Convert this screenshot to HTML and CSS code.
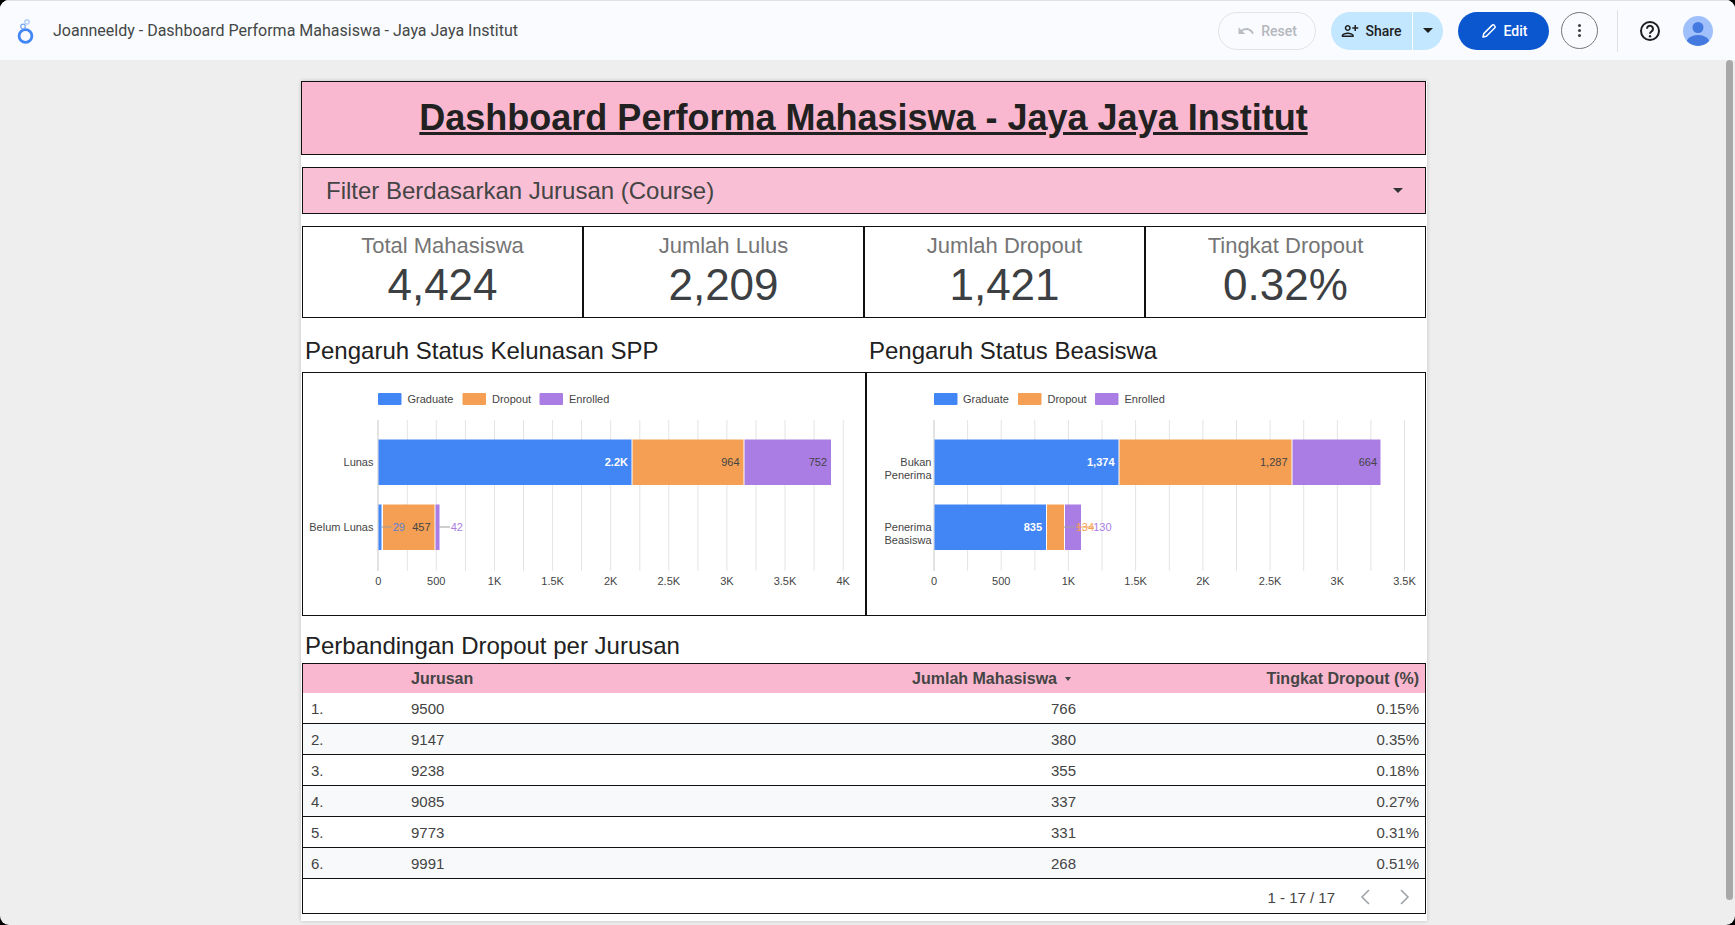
FILE: index.html
```html
<!DOCTYPE html>
<html>
<head>
<title>Dashboard Performa Mahasiswa - Jaya Jaya Institut</title>
<meta name="viewport" content="width=device-width, initial-scale=1.0">
<link rel="stylesheet" href="styles.css">
</head>
<body>

<div class="app">

<header class="topbar">
  <svg class="logo" viewBox="0 0 20 28" width="20" height="28">
    <circle cx="9.5" cy="19" r="6.4" fill="none" stroke="#4285f4" stroke-width="2.8"/>
    <circle cx="7" cy="9.5" r="2.3" fill="none" stroke="#7baaf7" stroke-width="1.3"/>
    <circle cx="11" cy="5" r="2.2" fill="none" stroke="#a3c4f9" stroke-width="1.2"/>
  </svg>
  <span class="report-name">Joanneeldy - Dashboard Performa Mahasiswa - Jaya Jaya Institut</span>

  <div class="actions">
    <button class="btn btn-reset">
      <svg viewBox="0 0 24 24" width="18" height="18"><path fill="#b9bcc1" d="M12.5 8c-2.65 0-5.05 1-6.9 2.6L2 7v9h9l-3.62-3.62A7.98 7.98 0 0 1 12.5 10.5c3.54 0 6.55 2.31 7.6 5.5l2.37-.78C21.08 11.03 17.15 8 12.5 8z"/></svg>
      Reset
    </button>
    <div class="share">
      <button class="btn btn-share">
        <svg viewBox="0 0 24 24" width="18" height="18"><path fill="#1f1f1f" d="M15 12c2.2 0 4-1.8 4-4s-1.800-4-4-4-4 1.800-4 4 1.800 4 4 4zm0-6c1.100 0 2 .9 2 2s-.9 2-2 2-2-.9-2-2 .9-2 2-2zm0 8c-2.700 0-8 1.300-8 4v2h16v-2c0-2.700-5.300-4-8-4zm-6 4c.2-.7 3.300-2 6-2s5.800 1.300 6 2H9zM6 12V9h3V7H6V4H4v3H1v2h3v3h2z" transform="matrix(-1 0 0 1 24 0)"/></svg>
        Share
      </button>
      <button class="btn btn-caret"><span class="caret"></span></button>
    </div>
    <button class="btn btn-edit">
      <svg viewBox="0 0 24 24" width="18" height="18"><path fill="none" stroke="#fff" stroke-width="2" stroke-linejoin="round" d="M4 20l1-4.500L16 4.500a2 2 0 0 1 3 0l.5.5a2 2 0 0 1 0 3L8.500 19z"/></svg>
      Edit
    </button>
    <button class="btn-more"><i></i><i></i><i></i></button>
    <span class="bar-divider"></span>
    <svg class="help" viewBox="0 0 24 24" width="24" height="24"><circle cx="12" cy="12" r="9" fill="none" stroke="#1f1f1f" stroke-width="2"/><path fill="none" stroke="#1f1f1f" stroke-width="2" d="M9 9.800a3 3 0 1 1 4.700 2.400c-1 .7-1.700 1.300-1.700 2.600"/><circle cx="12" cy="17.300" r="1.200" fill="#1f1f1f"/></svg>
    <svg class="avatar" viewBox="0 0 30 30" width="30" height="30">
      <defs><clipPath id="avatar-clip"><circle cx="15" cy="15" r="15"/></clipPath></defs>
      <circle cx="15" cy="15" r="15" fill="#a0c0fb"/>
      <g clip-path="url(#avatar-clip)" fill="#4479df">
        <circle cx="15" cy="11.500" r="5.500"/>
        <ellipse cx="15" cy="26.500" rx="11.500" ry="7.500"/>
      </g>
    </svg>
  </div>
</header>

<main class="canvas">
<div class="page">

  <h1 class="title">Dashboard Performa Mahasiswa - Jaya Jaya Institut</h1>

  <div class="filter">
    <span>Filter Berdasarkan Jurusan (Course)</span>
    <span class="caret"></span>
  </div>

  <section class="scores">
    <div class="score"><p>Total Mahasiswa</p><b>4,424</b></div>
    <div class="score"><p>Jumlah Lulus</p><b>2,209</b></div>
    <div class="score"><p>Jumlah Dropout</p><b>1,421</b></div>
    <div class="score"><p>Tingkat Dropout</p><b>0.32%</b></div>
  </section>

  <section class="charts">
    <div class="chart chart-left">
      <h2>Pengaruh Status Kelunasan SPP</h2>
      <div class="chart-box">
        <svg class="plot" viewBox="0 0 564 244" width="564" height="244">
          <g class="legend">
            <rect class="blue" x="76" y="21" width="23.500" height="12" rx="1"/>
            <text x="105.500" y="27">Graduate</text>
            <rect class="orange" x="160.500" y="21" width="23.500" height="12" rx="1"/>
            <text x="190" y="27">Dropout</text>
            <rect class="purple" x="237.500" y="21" width="23.500" height="12" rx="1"/>
            <text x="267" y="27">Enrolled</text>
          </g>
          <g class="grid">
            <line x1="105.300" x2="105.300" y1="48" y2="199"/>
            <line x1="134.300" x2="134.300" y1="48" y2="199"/>
            <line x1="163.400" x2="163.400" y1="48" y2="199"/>
            <line x1="192.500" x2="192.500" y1="48" y2="199"/>
            <line x1="221.500" x2="221.500" y1="48" y2="199"/>
            <line x1="250.600" x2="250.600" y1="48" y2="199"/>
            <line x1="279.600" x2="279.600" y1="48" y2="199"/>
            <line x1="308.700" x2="308.700" y1="48" y2="199"/>
            <line x1="337.800" x2="337.800" y1="48" y2="199"/>
            <line x1="366.800" x2="366.800" y1="48" y2="199"/>
            <line x1="395.900" x2="395.900" y1="48" y2="199"/>
            <line x1="424.900" x2="424.900" y1="48" y2="199"/>
            <line x1="454" x2="454" y1="48" y2="199"/>
            <line x1="483" x2="483" y1="48" y2="199"/>
            <line x1="512.100" x2="512.100" y1="48" y2="199"/>
            <line x1="541.200" x2="541.200" y1="48" y2="199"/>
          </g>
          <line class="axis" x1="76" x2="76" y1="48" y2="199"/>
          <g class="bars">
            <rect class="blue" x="76.500" y="67.500" width="253" height="45.500"/>
            <rect class="orange" x="330.500" y="67.500" width="111" height="45.500"/>
            <rect class="purple" x="442.500" y="67.500" width="86.500" height="45.500"/>
            <rect class="blue" x="76.500" y="132.500" width="3" height="45.500"/>
            <rect class="orange" x="81" y="132.500" width="51.500" height="45.500"/>
            <rect class="purple" x="133.500" y="132.500" width="4" height="45.500"/>
          </g>
          <g class="leaders">
            <line x1="79.500" x2="90" y1="155" y2="155"/>
            <line x1="137.500" x2="148" y1="155" y2="155"/>
          </g>
          <g class="labels">
            <text class="on-blue" x="326" y="90">2.2K</text>
            <text x="437.500" y="90">964</text>
            <text x="525" y="90">752</text>
            <text class="out-blue" x="103" y="155">29</text>
            <text x="128.500" y="155">457</text>
            <text class="out-purple" x="161" y="155">42</text>
          </g>
          <g class="cats">
            <text x="71.500" y="90">Lunas</text>
            <text x="71.500" y="155">Belum Lunas</text>
          </g>
          <g class="ticks">
            <text x="76.200" y="209">0</text>
            <text x="134.300" y="209">500</text>
            <text x="192.500" y="209">1K</text>
            <text x="250.600" y="209">1.5K</text>
            <text x="308.700" y="209">2K</text>
            <text x="366.800" y="209">2.5K</text>
            <text x="424.900" y="209">3K</text>
            <text x="483" y="209">3.5K</text>
            <text x="541.200" y="209">4K</text>
          </g>
        </svg>
      </div>
    </div>

    <div class="chart chart-right">
      <h2>Pengaruh Status Beasiswa</h2>
      <div class="chart-box">
        <svg class="plot" viewBox="0 0 560 244" width="560" height="244">
          <g class="legend">
            <rect class="blue" x="68" y="21" width="23.500" height="12" rx="1"/>
            <text x="97" y="27">Graduate</text>
            <rect class="orange" x="152" y="21" width="23.500" height="12" rx="1"/>
            <text x="181.500" y="27">Dropout</text>
            <rect class="purple" x="229" y="21" width="23.500" height="12" rx="1"/>
            <text x="258.500" y="27">Enrolled</text>
          </g>
          <g class="grid">
            <line x1="101.600" x2="101.600" y1="48" y2="199"/>
            <line x1="135.200" x2="135.200" y1="48" y2="199"/>
            <line x1="168.800" x2="168.800" y1="48" y2="199"/>
            <line x1="202.400" x2="202.400" y1="48" y2="199"/>
            <line x1="236" x2="236" y1="48" y2="199"/>
            <line x1="269.600" x2="269.600" y1="48" y2="199"/>
            <line x1="303.300" x2="303.300" y1="48" y2="199"/>
            <line x1="336.900" x2="336.900" y1="48" y2="199"/>
            <line x1="370.500" x2="370.500" y1="48" y2="199"/>
            <line x1="404.100" x2="404.100" y1="48" y2="199"/>
            <line x1="437.700" x2="437.700" y1="48" y2="199"/>
            <line x1="471.300" x2="471.300" y1="48" y2="199"/>
            <line x1="504.900" x2="504.900" y1="48" y2="199"/>
            <line x1="538.500" x2="538.500" y1="48" y2="199"/>
          </g>
          <line class="axis" x1="68" x2="68" y1="48" y2="199"/>
          <g class="bars">
            <rect class="blue" x="68.500" y="67.500" width="184" height="45.500"/>
            <rect class="orange" x="253.500" y="67.500" width="172" height="45.500"/>
            <rect class="purple" x="426.500" y="67.500" width="88" height="45.500"/>
            <rect class="blue" x="68.500" y="132.500" width="111.500" height="45.500"/>
            <rect class="orange" x="181" y="132.500" width="17" height="45.500"/>
            <rect class="purple" x="199" y="132.500" width="16" height="45.500"/>
          </g>
          <g class="leaders">
            <line x1="198" x2="209" y1="155" y2="155"/>
          </g>
          <g class="labels">
            <text class="on-blue" x="248.500" y="90">1,374</text>
            <text x="421.500" y="90">1,287</text>
            <text x="511" y="90">664</text>
            <text class="on-blue" x="176" y="155">835</text>
            <text class="out-orange" x="228" y="155">134</text>
            <text class="out-purple" x="245.500" y="155">130</text>
          </g>
          <line class="strike" x1="210" x2="228" y1="155" y2="155"/>
          <g class="cats">
            <text x="65.500" y="90">Bukan</text>
            <text x="65.500" y="103">Penerima</text>
            <text x="65.500" y="155">Penerima</text>
            <text x="65.500" y="168">Beasiswa</text>
          </g>
          <g class="ticks">
            <text x="68" y="209">0</text>
            <text x="135.200" y="209">500</text>
            <text x="202.400" y="209">1K</text>
            <text x="269.600" y="209">1.5K</text>
            <text x="336.900" y="209">2K</text>
            <text x="404.100" y="209">2.5K</text>
            <text x="471.300" y="209">3K</text>
            <text x="538.500" y="209">3.5K</text>
          </g>
        </svg>
      </div>
    </div>
  </section>

  <section class="compare">
    <h2>Perbandingan Dropout per Jurusan</h2>
    <div class="table-box">
      <table>
        <thead>
          <tr>
            <th class="col-no"></th>
            <th class="col-name">Jurusan</th>
            <th class="col-count">Jumlah Mahasiswa<span class="sort"></span></th>
            <th class="col-rate">Tingkat Dropout (%)</th>
          </tr>
        </thead>
        <tbody>
          <tr><td class="col-no">1.</td><td class="col-name">9500</td><td class="col-count">766</td><td class="col-rate">0.15%</td></tr>
          <tr><td class="col-no">2.</td><td class="col-name">9147</td><td class="col-count">380</td><td class="col-rate">0.35%</td></tr>
          <tr><td class="col-no">3.</td><td class="col-name">9238</td><td class="col-count">355</td><td class="col-rate">0.18%</td></tr>
          <tr><td class="col-no">4.</td><td class="col-name">9085</td><td class="col-count">337</td><td class="col-rate">0.27%</td></tr>
          <tr><td class="col-no">5.</td><td class="col-name">9773</td><td class="col-count">331</td><td class="col-rate">0.31%</td></tr>
          <tr><td class="col-no">6.</td><td class="col-name">9991</td><td class="col-count">268</td><td class="col-rate">0.51%</td></tr>
        </tbody>
      </table>
      <div class="pager">
        <span>1 - 17 / 17</span>
        <svg viewBox="0 0 12 16" width="12" height="16"><path d="M10 1L3 8l7 7" fill="none" stroke="#9aa0a6" stroke-width="1.500"/></svg>
        <svg viewBox="0 0 12 16" width="12" height="16"><path d="M2 1l7 7-7 7" fill="none" stroke="#9aa0a6" stroke-width="1.500"/></svg>
      </div>
    </div>
  </section>

</div>
</main>

<div class="scrollbar"></div>

</div>

</body>
</html>
```

FILE: styles.css
```css
html, body {
   background: #000;
   height: 100%;
   margin: 0;
   overflow: hidden;}

body {
   color: #212121;
   font-family: 'Liberation Sans', Arial, sans-serif;}

.app {
   background: #eee;
   border-radius: 9px 9px 9px 9px;
   display: flex;
   flex-direction: column;
   height: 100%;
   overflow: hidden;
   position: relative;}

/* top bar */
.topbar {
   align-items: center;
   background: #f9fbff;
   border-top: 1px solid #dfe1e5;
   box-sizing: border-box;
   display: flex;
   flex: none;
   height: 60px;
   padding: 0 22px 0 16px;}

.logo {
   flex: none;
   margin-right: 17px;}

.report-name {
   color: #444746;
   font-family: 'Roboto', sans-serif;
   font-size: 16px;}

.actions {
   align-items: center;
   display: flex;
   margin-left: auto;}

.btn {
   align-items: center;
   border: none;
   display: flex;
   font-family: 'Roboto', sans-serif;
   font-size: 14px;
   font-weight: 500;
   gap: 6px;
   height: 38px;
   justify-content: center;
   padding: 0;}

.btn-reset {
   background: transparent;
   border: 1px solid #e1e3e6;
   border-radius: 19px;
   box-sizing: border-box;
   color: #b4b7bb;
   margin-right: 15px;
   width: 98px;}

.share {
   display: flex;
   margin-right: 15px;}

.btn-share {
   background: #c2e7ff;
   border-radius: 19px 0 0 19px;
   color: #1f1f1f;
   width: 81px;}

.btn-caret {
   background: #c2e7ff;
   border-left: 1px solid #f9fbff;
   border-radius: 0 19px 19px 0;
   width: 31px;}

.caret {
   border-left: 5px solid transparent;
   border-right: 5px solid transparent;
   border-top: 5px solid #1f1f1f;
   display: inline-block;}

.btn-edit {
   background: #0b57d0;
   border-radius: 19px;
   color: #fff;
   margin-right: 12px;
   width: 91px;}

.btn-more {
   align-items: center;
   background: transparent;
   border: 1px solid #747775;
   border-radius: 50%;
   box-sizing: border-box;
   display: flex;
   flex-direction: column;
   gap: 2px;
   height: 37px;
   justify-content: center;
   margin-right: 19px;
   padding: 0;
   width: 37px;}

.btn-more i {
   background: #3c4043;
   border-radius: 50%;
   height: 3px;
   width: 3px;}

.bar-divider {
   background: #dfe1e5;
   height: 42px;
   margin-right: 20px;
   width: 1px;}

.help {
   margin-right: 21px;}

/* canvas */
.canvas {
   flex: 1;
   overflow: hidden;}

.page {
   background: #fff;
   box-shadow: 0 0 4px rgba(0,0,0,.2);
   box-sizing: border-box;
   height: 840px;
   margin: 21px 0 0 301px;
   width: 1126px;}

.title {
   align-items: center;
   background: #f9b8cf;
   border: 1px solid #111;
   box-sizing: border-box;
   display: flex;
   font-size: 36px;
   font-weight: 700;
   height: 74px;
   justify-content: center;
   margin: 0 1px 12px 0;
   text-decoration: underline;}

.filter {
   align-items: center;
   background: #f9c0d5;
   border: 1px solid #111;
   box-sizing: border-box;
   color: #444;
   display: flex;
   font-size: 24px;
   height: 47px;
   justify-content: space-between;
   margin: 0 1px 12px 1px;
   padding: 0 22px 0 23px;}

.filter .caret {
   border-top-color: #333;}

.scores {
   display: grid;
   grid-template-columns: repeat(4, 1fr);
   height: 92px;
   margin: 0 1px 0 1px;}

.score {
   border: 1px solid #111;
   text-align: center;}

.score p {
   color: #757575;
   font-size: 22px;
   line-height: 26px;
   margin: 6px 0 0;}

.score b {
   color: #3c4043;
   display: block;
   font-size: 44px;
   font-weight: 400;
   line-height: 52px;}

/* charts */
.charts {
   display: flex;
   margin: 0 1px 0 1px;}

.chart-left {
   width: 564px;}

.chart-right {
   width: 560px;}

.chart h2, .compare h2 {
   font-size: 24px;
   font-weight: 400;
   line-height: 28px;
   margin: 0;
   padding: 19px 0 7px 3px;}

.chart-box {
   border: 1px solid #111;
   box-sizing: border-box;
   height: 244px;}

.plot {
   display: block;
   margin: -1px;}

.plot text {
   dominant-baseline: central;
   fill: #444;
   font-family: 'Liberation Sans', Arial, sans-serif;
   font-size: 11px;}

.legend .blue, .bars .blue { fill: #4285f4; }
.legend .orange, .bars .orange { fill: #f49f53; }
.legend .purple, .bars .purple { fill: #aa7de4; }

.grid line {
   stroke: #e4e4e4;
   stroke-width: 1;}

.axis {
   stroke: #c8c8c8;
   stroke-width: 1;}

.leaders line {
   stroke: #9e9e9e;
   stroke-width: 1;}

.strike {
   stroke: #f49f53;
   stroke-width: 1;}

.labels text, .cats text {
   text-anchor: end;}

.ticks text {
   text-anchor: middle;}

.plot .on-blue {
   fill: #fff;
   font-weight: 700;}

.plot .out-blue { fill: #5b82d6; }
.plot .out-orange { fill: #f49f53; }
.plot .out-purple { fill: #aa7de4; }

/* table */
.compare {
   margin: 0 1px;}

.compare h2 {
   padding: 16px 0 3px 3px;}

.table-box {
   border: 1px solid #111;
   box-sizing: border-box;
   height: 251px;}

table {
   border-collapse: collapse;
   table-layout: fixed;
   width: 100%;}

th {
   background: #f9b8cf;
   color: #444;
   font-size: 16px;
   font-weight: 700;
   height: 29px;
   padding: 0;}

td {
   border-bottom: 1px solid #111;
   color: #444;
   font-size: 15px;
   height: 30px;
   padding: 0;}

tbody tr:nth-child(even) td {
   background: #f8f9fa;}

.col-no {
   padding-left: 8px;
   text-align: left;
   width: 100px;}

.col-name {
   text-align: left;}

.col-count {
   padding-right: 0;
   text-align: right;
   width: 400px;}

.col-rate {
   padding-right: 6px;
   text-align: right;
   width: 343px;}

.sort {
   border-left: 3.500px solid transparent;
   border-right: 3.500px solid transparent;
   border-top: 4px solid #444;
   display: inline-block;
   margin-left: 8px;
   margin-right: 5px;
   vertical-align: middle;}

.pager {
   align-items: center;
   color: #444;
   display: flex;
   font-size: 15px;
   height: 36px;
   justify-content: flex-end;
   padding-right: 14px;}

.pager span {
   margin-right: 24px;}

.pager svg + svg {
   margin-left: 28px;}

/* page scrollbar, drawn over the canvas */
.scrollbar {
   background: #a8a8a8;
   border-radius: 4px;
   height: 840px;
   position: absolute;
   right: 2px;
   top: 60px;
   width: 7px;}
```
